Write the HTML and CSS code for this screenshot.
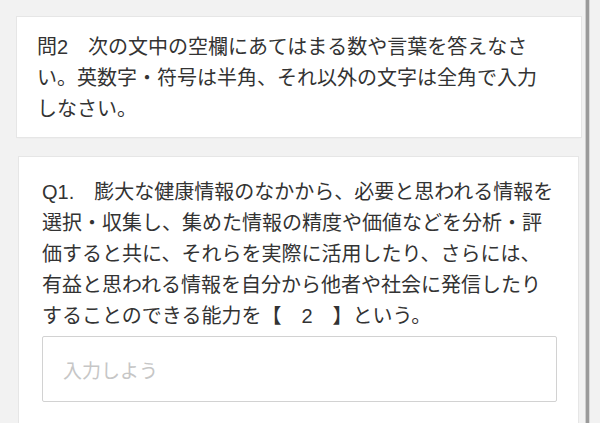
FILE: index.html
```html
<!DOCTYPE html>
<html lang="ja">
<head>
<meta charset="utf-8">
<link rel="stylesheet" href="styles.css">
</head>
<body>
<div class="page">
  <main class="column">
    <section class="card card-head">
      <p class="lead">問2　次の文中の空欄にあてはまる数や言葉を答えなさい。英数字・符号は半角、それ以外の文字は全角で入力しなさい。</p>
    </section>
    <section class="card card-q">
      <p class="question">Q1.　膨大な健康情報のなかから、必要と思われる情報を選択・収集し、集めた情報の精度や価値などを分析・評価すると共に、それらを実際に活用したり、さらには、有益と思われる情報を自分から他者や社会に発信したりすることのできる能力を【　2　】という。</p>
      <div class="answer"><span class="placeholder">入力しよう</span></div>
    </section>
  </main>
  <div class="rail"></div>
</div>
</body>
</html>
```
FILE: styles.css
```css
html, body {
  margin: 0;
  padding: 0;
  height: 423px;
  overflow: hidden;
  background: #f2f2f2;
}
.page {
  display: flex;
  padding-left: 17px;
  height: 423px;
  box-sizing: border-box;
  font-family: "Liberation Sans", "Noto Sans CJK JP", sans-serif;
  color: #333333;
}
.column {
  flex: none;
  width: 564px;
  padding-top: 17px;
  display: flex;
  flex-direction: column;
  gap: 20px;
  height: 423px;
  box-sizing: border-box;
}
.rail {
  flex: none;
  width: 5px;
  height: 423px;
  margin-left: 4px;
  background: #9a9a9a;
  border-left: 1px solid #cfcfcf;
  border-right: 1px solid #d8d8d8;
  box-sizing: border-box;
}
.card {
  background: #ffffff;
  box-shadow: 0 0 0 1px #e6e6e6, 0 1px 2px rgba(0,0,0,0.05);
}
.card-head {
  padding: 15px 38px 12px 20px;
  height: 93px;
}
.lead, .question {
  margin: 0;
  font-size: 20px;
  line-height: 31px;
}
.card-q {
  margin: 0 3px 0 2px;
  padding: 20px 20px 30px 23px;
  flex: 1;
}
.answer {
  margin-top: 4px;
  width: 493px;
  height: 64px;
  border: 1px solid #d2d2d2;
  border-radius: 2px;
  display: flex;
  align-items: center;
  padding-left: 20px;
  box-sizing: content-box;
}
.placeholder {
  font-family: "Noto Sans CJK JP", sans-serif;
  font-size: 19px;
  color: #c6c6c6;
}
```
